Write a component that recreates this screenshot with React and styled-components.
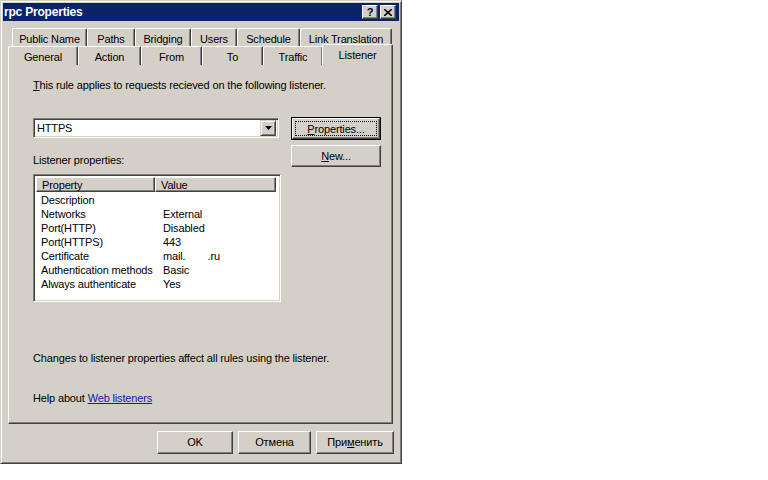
import React from "react";
import styled, { createGlobalStyle } from "styled-components";

const Global = createGlobalStyle`
  html, body {
    margin: 0;
    padding: 0;
    background: #ffffff;
  }
  body {
    font-family: "Liberation Sans", Arial, sans-serif;
    font-size: 11px;
    letter-spacing: -0.15px;
    color: #000;
  }
`;

const Window = styled.div`
  width: 402px;
  height: 464px;
  box-sizing: border-box;
  background: #d4d0c8;
  border: 1px solid;
  border-color: #d4d0c8 #404040 #404040 #d4d0c8;
  box-shadow: inset 1px 1px #ffffff, inset -1px -1px #808080;
  padding: 2px;
  display: flex;
  flex-direction: column;
`;

const TitleBar = styled.div`
  height: 18px;
  background: #0a246a;
  display: flex;
  align-items: center;
  padding: 0 3px 0 1px;
`;

const Title = styled.div`
  flex: 1;
  color: #fff;
  font-weight: bold;
  font-size: 12px;
  letter-spacing: -0.2px;
`;

const CapButton = styled.div`
  width: 16px;
  height: 14px;
  box-sizing: border-box;
  background: #d4d0c8;
  border: 1px solid;
  border-color: #fff #404040 #404040 #fff;
  box-shadow: inset -1px -1px #808080;
  margin-left: ${(p) => (p.$gap ? "2px" : "0")};
  display: flex;
  align-items: center;
  justify-content: center;
  font-weight: bold;
  font-size: 11px;
  line-height: 1;
`;

const Body = styled.div`
  flex: 1;
  display: flex;
  flex-direction: column;
  padding: 6px 6px 0 5px;
`;

const TabStrip = styled.div`
  display: flex;
  flex-direction: column;
  position: relative;
  z-index: 1;
`;

const TabRow = styled.div`
  display: flex;
  height: 19px;
  padding-left: ${(p) => p.$indent}px;
  margin-top: ${(p) => (p.$front ? "-1px" : "0")};
`;

const Tab = styled.div`
  width: ${(p) => p.$w}px;
  box-sizing: border-box;
  height: 19px;
  margin-top: 1px;
  border-top: 1px solid #fff;
  border-left: 1px solid #fff;
  border-right: 1px solid #404040;
  border-radius: 2px 2px 0 0;
  box-shadow: inset -1px 0 #808080;
  background: #d4d0c8;
  display: flex;
  align-items: center;
  justify-content: center;
  padding-top: 2px;
  white-space: nowrap;
`;

const ActiveTab = styled(Tab)`
  height: 21px;
  margin-top: -1px;
  margin-bottom: -2px;
  margin-left: -1px;
  width: ${(p) => p.$w + 2}px;
  align-items: flex-start;
  padding-top: 4px;
`;

const Panel = styled.div`
  height: 360px;
  box-sizing: border-box;
  border: 1px solid;
  border-color: #fff #404040 #404040 #fff;
  box-shadow: inset -1px -1px #808080;
  padding: 14px 0 0 24px;
  display: flex;
  flex-direction: column;
`;

const Label = styled.div`
  line-height: 13px;
  margin-top: ${(p) => p.$mt || 0}px;
`;

const Key = styled.span`
  text-decoration: underline;
`;

const ListenerRow = styled.div`
  display: flex;
  margin-top: 25px;
`;

const LeftCol = styled.div`
  width: 258px;
  display: flex;
  flex-direction: column;
`;

const Combo = styled.div`
  width: 246px;
  height: 20px;
  box-sizing: border-box;
  background: #fff;
  border: 1px solid;
  border-color: #808080 #fff #fff #808080;
  box-shadow: inset 1px 1px #404040, inset -1px -1px #d4d0c8;
  display: flex;
  align-items: center;
  padding: 2px 2px 2px 3px;
  margin-top: 1px;
`;

const ComboText = styled.div`
  flex: 1;
`;

const DropButton = styled.div`
  width: 16px;
  height: 16px;
  box-sizing: border-box;
  background: #d4d0c8;
  border: 1px solid;
  border-color: #d4d0c8 #404040 #404040 #d4d0c8;
  box-shadow: inset 1px 1px #fff, inset -1px -1px #808080;
  display: flex;
  align-items: center;
  justify-content: center;
`;

const RightCol = styled.div`
  display: flex;
  flex-direction: column;
  gap: 5px;
`;

const Button = styled.div`
  width: ${(p) => p.$w}px;
  height: ${(p) => p.$h || 23}px;
  box-sizing: border-box;
  background: #d4d0c8;
  border: 1px solid;
  border-color: #fff #404040 #404040 #fff;
  box-shadow: inset -1px -1px #808080;
  display: flex;
  align-items: center;
  justify-content: center;
  padding-bottom: 1px;
  margin-left: ${(p) => p.$ml || 0}px;
`;

const DefaultButton = styled.div`
  width: 90px;
  height: 23px;
  box-sizing: border-box;
  border: 1px solid #000;
  background: #d4d0c8;
  display: flex;
`;

const DefaultInner = styled.div`
  flex: 1;
  border: 1px solid;
  border-color: #fff #404040 #404040 #fff;
  box-shadow: inset -1px -1px #808080;
  padding: 2px;
  display: flex;
`;

const FocusRing = styled.div`
  flex: 1;
  border: 1px dotted #000;
  display: flex;
  align-items: center;
  justify-content: center;
`;

const ListView = styled.div`
  width: 248px;
  height: 128px;
  box-sizing: border-box;
  background: #fff;
  border: 1px solid;
  border-color: #808080 #fff #fff #808080;
  box-shadow: inset 1px 1px #404040, inset -1px -1px #d4d0c8;
  padding: 2px;
  margin-top: 7px;
`;

const HeaderRow = styled.div`
  display: flex;
  height: 15px;
  margin-right: 2px;
`;

const HeaderCell = styled.div`
  width: ${(p) => p.$w}px;
  box-sizing: border-box;
  background: #d4d0c8;
  border: 1px solid;
  border-color: #fff #404040 #404040 #fff;
  box-shadow: inset -1px -1px #808080;
  padding-left: 5px;
  display: flex;
  align-items: center;
`;

const Rows = styled.div`
  padding-top: 1px;
`;

const Row = styled.div`
  display: flex;
  height: 14px;
  align-items: center;
`;

const Cell = styled.div`
  width: ${(p) => p.$w}px;
  padding-left: ${(p) => p.$pl}px;
  box-sizing: border-box;
  white-space: nowrap;
`;

const Gap = styled.span`
  display: inline-block;
  width: 22px;
`;

const Link = styled.span`
  text-decoration: underline;
  color: #1a1aa6;
`;

const ButtonRow = styled.div`
  display: flex;
  justify-content: flex-end;
  padding-top: 7px;
  margin-right: -1px;
`;

const rows = [
  ["Description", ""],
  ["Networks", "External"],
  ["Port(HTTP)", "Disabled"],
  ["Port(HTTPS)", "443"],
  ["Certificate", "cert"],
  ["Authentication methods", "Basic"],
  ["Always authenticate", "Yes"],
];

const backTabs = [
  ["Public Name", 75],
  ["Paths", 48],
  ["Bridging", 56],
  ["Users", 46],
  ["Schedule", 63],
  ["Link Translation", 92],
];

const frontTabs = [
  ["General", 70],
  ["Action", 63],
  ["From", 61],
  ["To", 61],
  ["Traffic", 60],
];

export default function App() {
  return (
    <>
      <Global />
      <Window>
        <TitleBar>
          <Title>rpc Properties</Title>
          <CapButton>?</CapButton>
          <CapButton $gap>
            <svg width="8" height="7" viewBox="0 0 8 7">
              <path d="M0 0 L8 7 M8 0 L0 7" stroke="#000" strokeWidth="1.6" />
            </svg>
          </CapButton>
        </TitleBar>
        <Body>
          <TabStrip>
            <TabRow $indent={4}>
              {backTabs.map(([t, w]) => (
                <Tab key={t} $w={w}>
                  {t}
                </Tab>
              ))}
            </TabRow>
            <TabRow $indent={0} $front>
              {frontTabs.map(([t, w]) => (
                <Tab key={t} $w={w}>
                  {t}
                </Tab>
              ))}
              <ActiveTab $w={69}>Listener</ActiveTab>
            </TabRow>
          </TabStrip>
          <Panel>
            <Label>
              <Key>T</Key>his rule applies to requests recieved on the following listener.
            </Label>
            <ListenerRow>
              <LeftCol>
                <Combo>
                  <ComboText>HTTPS</ComboText>
                  <DropButton>
                    <svg width="7" height="4" viewBox="0 0 7 4">
                      <path d="M0 0 H7 L3.5 4 Z" fill="#000" />
                    </svg>
                  </DropButton>
                </Combo>
                <Label $mt={16}>Listener properties:</Label>
                <ListView>
                  <HeaderRow>
                    <HeaderCell $w={120}>Property</HeaderCell>
                    <HeaderCell $w={122}>Value</HeaderCell>
                  </HeaderRow>
                  <Rows>
                    {rows.map(([k, v]) => (
                      <Row key={k}>
                        <Cell $w={120} $pl={5}>
                          {k}
                        </Cell>
                        <Cell $w={120} $pl={7}>
                          {v === "cert" ? (
                            <>
                              mail.<Gap />.ru
                            </>
                          ) : (
                            v
                          )}
                        </Cell>
                      </Row>
                    ))}
                  </Rows>
                </ListView>
              </LeftCol>
              <RightCol>
                <DefaultButton>
                  <DefaultInner>
                    <FocusRing>
                      <span>
                        <Key>P</Key>roperties...
                      </span>
                    </FocusRing>
                  </DefaultInner>
                </DefaultButton>
                <Button $w={90} $h={22}>
                  <span>
                    <Key>N</Key>ew...
                  </span>
                </Button>
              </RightCol>
            </ListenerRow>
            <Label $mt={50}>Changes to listener properties affect all rules using the listener.</Label>
            <Label $mt={27}>
              Help about <Link>Web listeners</Link>
            </Label>
          </Panel>
          <ButtonRow>
            <Button $w={76}>OK</Button>
            <Button $w={73} $ml={5}>
              Отмена
            </Button>
            <Button $w={78} $ml={5}>
              <span>
                При<Key>м</Key>енить
              </span>
            </Button>
          </ButtonRow>
        </Body>
      </Window>
    </>
  );
}
